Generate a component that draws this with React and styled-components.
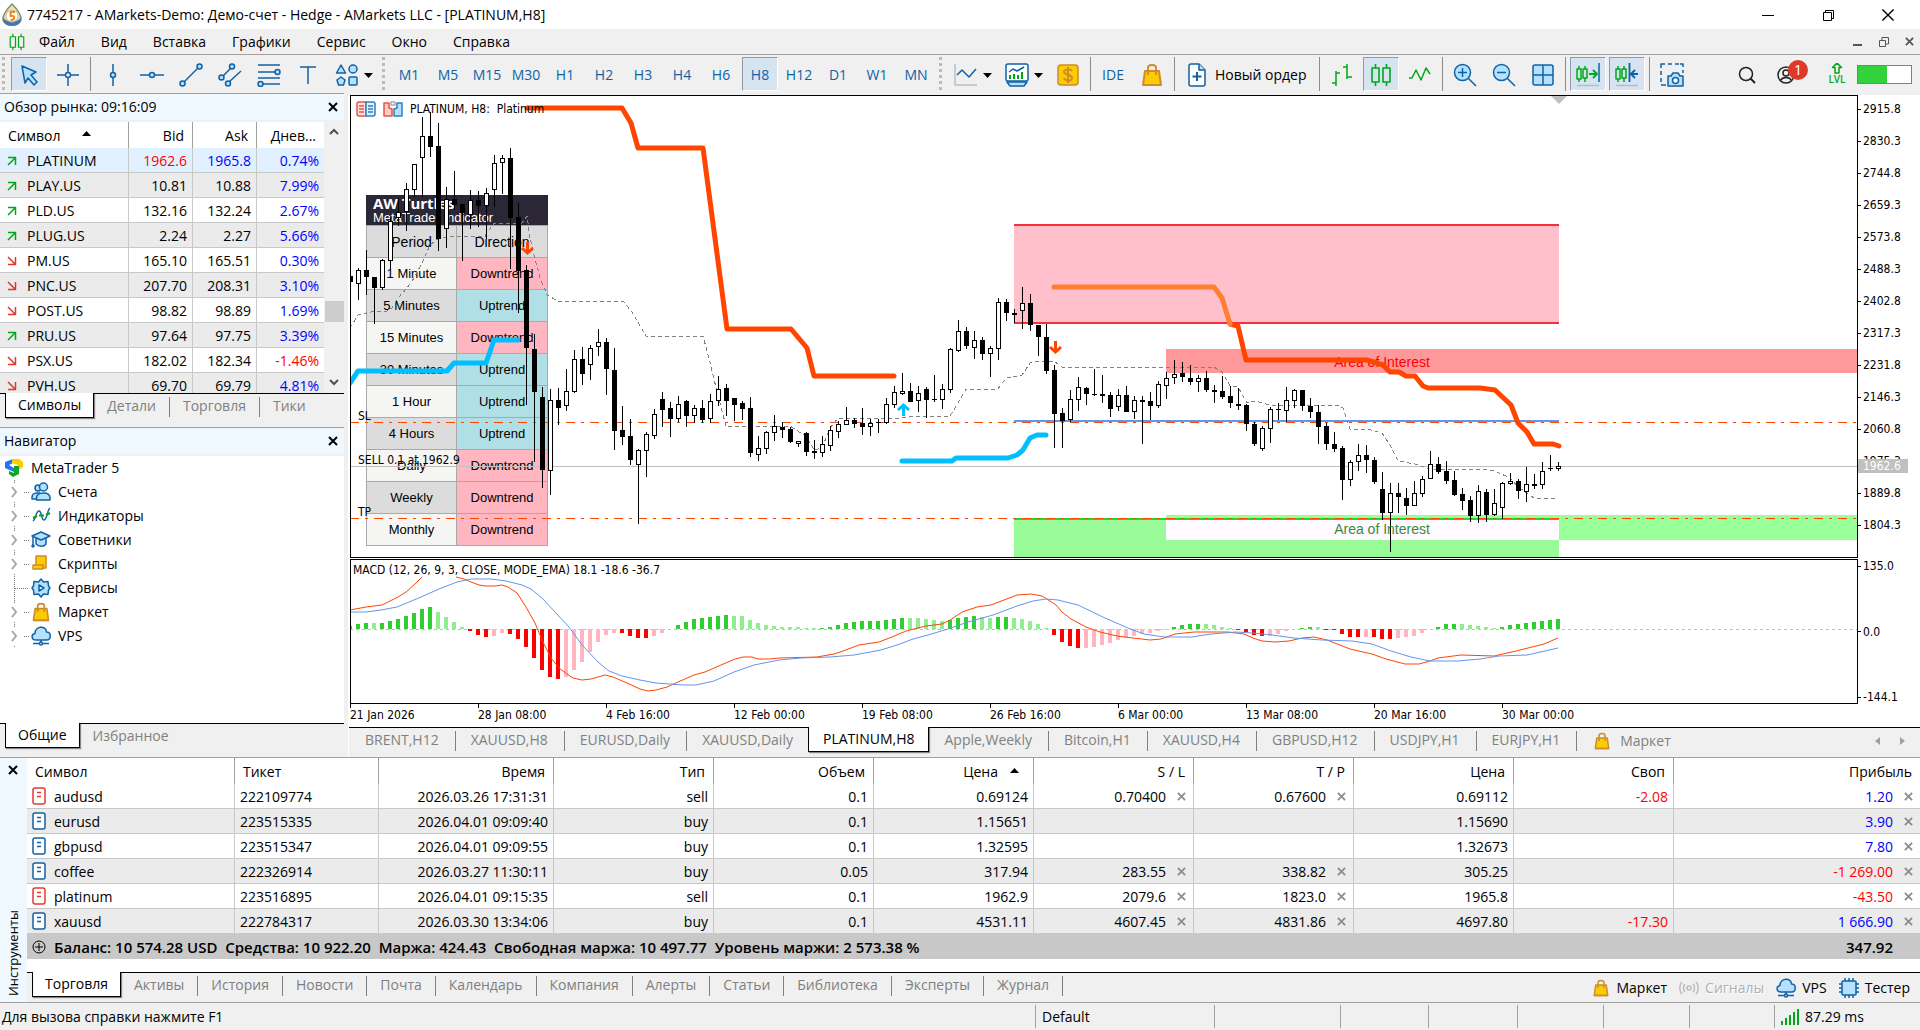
import { Fragment } from "react";
import styled, { createGlobalStyle } from "styled-components";

const blue = "#0f62a6";
const sky = "#b5e1ff";
const green = "#00a818";
const gold = "#fccb00";
const bronze = "#d08b2c";

const menu = ["Файл", "Вид", "Вставка", "Графики", "Сервис", "Окно", "Справка"];

const timeframes = ["M1", "M5", "M15", "M30", "H1", "H2", "H3", "H4", "H6", "H8", "H12", "D1", "W1", "MN"];

const quotes = [
  { symbol: "PLATINUM", up: true, bid: "1962.6", ask: "1965.8", day: "0.74%", selected: true },
  { symbol: "PLAY.US", up: true, bid: "10.81", ask: "10.88", day: "7.99%" },
  { symbol: "PLD.US", up: true, bid: "132.16", ask: "132.24", day: "2.67%" },
  { symbol: "PLUG.US", up: true, bid: "2.24", ask: "2.27", day: "5.66%" },
  { symbol: "PM.US", up: false, bid: "165.10", ask: "165.51", day: "0.30%" },
  { symbol: "PNC.US", up: false, bid: "207.70", ask: "208.31", day: "3.10%" },
  { symbol: "POST.US", up: false, bid: "98.82", ask: "98.89", day: "1.69%" },
  { symbol: "PRU.US", up: true, bid: "97.64", ask: "97.75", day: "3.39%" },
  { symbol: "PSX.US", up: false, bid: "182.02", ask: "182.34", day: "-1.46%" },
  { symbol: "PVH.US", up: false, bid: "69.70", ask: "69.79", day: "4.81%" },
];

const trades = [
  { symbol: "audusd", ticket: "222109774", time: "2026.03.26 17:31:31", type: "sell", volume: "0.1", open: "0.69124", sl: "0.70400", tp: "0.67600", price: "0.69112", swap: "-2.08", profit: "1.20" },
  { symbol: "eurusd", ticket: "223515335", time: "2026.04.01 09:09:40", type: "buy", volume: "0.1", open: "1.15651", sl: "", tp: "", price: "1.15690", swap: "", profit: "3.90" },
  { symbol: "gbpusd", ticket: "223515347", time: "2026.04.01 09:09:55", type: "buy", volume: "0.1", open: "1.32595", sl: "", tp: "", price: "1.32673", swap: "", profit: "7.80" },
  { symbol: "coffee", ticket: "222326914", time: "2026.03.27 11:30:11", type: "buy", volume: "0.05", open: "317.94", sl: "283.55", tp: "338.82", price: "305.25", swap: "", profit: "-1 269.00" },
  { symbol: "platinum", ticket: "223516895", time: "2026.04.01 09:15:35", type: "sell", volume: "0.1", open: "1962.9", sl: "2079.6", tp: "1823.0", price: "1965.8", swap: "", profit: "-43.50" },
  { symbol: "xauusd", ticket: "222784317", time: "2026.03.30 13:34:06", type: "buy", volume: "0.1", open: "4531.11", sl: "4607.45", tp: "4831.86", price: "4697.80", swap: "-17.30", profit: "1 666.90" },
];

const chartTabs = ["BRENT,H12", "XAUUSD,H8", "EURUSD,Daily", "XAUUSD,Daily", "PLATINUM,H8", "Apple,Weekly", "Bitcoin,H1", "XAUUSD,H4", "GBPUSD,H12", "USDJPY,H1", "EURJPY,H1"];

const toolTabs = ["Торговля", "Активы", "История", "Новости", "Почта", "Календарь", "Компания", "Алерты", "Статьи", "Библиотека", "Эксперты", "Журнал"];

const trends = [
  ["1 Minute", "Downtrend"],
  ["5 Minutes", "Uptrend"],
  ["15 Minutes", "Downtrend"],
  ["30 Minutes", "Uptrend"],
  ["1 Hour", "Uptrend"],
  ["4 Hours", "Uptrend"],
  ["Daily", "Downtrend"],
  ["Weekly", "Downtrend"],
  ["Monthly", "Downtrend"],
];

const prices = ["2915.8", "2830.3", "2744.8", "2659.3", "2573.8", "2488.3", "2402.8", "2317.3", "2231.8", "2146.3", "2060.8", "1975.3", "1889.8", "1804.3"];

const dates = ["21 Jan 2026", "28 Jan 08:00", "4 Feb 16:00", "12 Feb 00:00", "19 Feb 08:00", "26 Feb 16:00", "6 Mar 00:00", "13 Mar 08:00", "20 Mar 16:00", "30 Mar 00:00"];

// high, body top, body bottom, low, rising
const candles = [
  [181, 181, 187, 187, 0], [173, 175, 189, 205, 1], [155, 175, 182, 200, 0], [182, 182, 193, 229, 0], [164, 165, 193, 195, 1],
  [122, 126, 166, 174, 1], [103, 117, 123, 131, 1], [88, 94, 117, 136, 1], [69, 69, 95, 102, 1], [22, 41, 63, 102, 1],
  [17, 41, 52, 62, 0], [28, 51, 144, 156, 0], [92, 104, 134, 153, 1], [76, 104, 110, 115, 0], [109, 109, 118, 166, 0],
  [95, 105, 120, 134, 1], [96, 105, 111, 132, 0], [93, 98, 111, 144, 1], [60, 68, 95, 112, 1], [60, 63, 68, 99, 1],
  [53, 63, 123, 174, 0], [108, 122, 176, 218, 0], [170, 175, 253, 310, 0], [239, 254, 297, 367, 0], [292, 302, 375, 393, 0],
  [294, 305, 376, 400, 1], [293, 305, 313, 330, 0], [274, 296, 311, 316, 1], [255, 264, 297, 298, 1], [252, 264, 279, 290, 0],
  [250, 253, 270, 285, 1], [234, 247, 252, 261, 1], [243, 247, 274, 300, 0], [253, 275, 336, 355, 0], [311, 335, 342, 350, 0],
  [324, 341, 365, 370, 0], [354, 355, 370, 429, 1], [337, 339, 356, 382, 1], [314, 319, 341, 344, 1], [297, 304, 315, 332, 0],
  [307, 313, 324, 342, 0], [301, 309, 324, 327, 1], [305, 306, 321, 332, 0], [310, 313, 321, 328, 1], [305, 313, 325, 328, 0],
  [299, 306, 324, 328, 1], [281, 294, 306, 311, 1], [289, 293, 306, 321, 0], [303, 303, 310, 326, 0], [306, 308, 314, 325, 0],
  [302, 313, 358, 362, 0], [341, 353, 360, 366, 1], [336, 337, 354, 359, 1], [320, 331, 338, 346, 1], [327, 332, 335, 343, 0],
  [332, 334, 347, 348, 0], [346, 346, 349, 352, 1], [337, 338, 357, 361, 0], [345, 356, 358, 364, 0], [341, 349, 358, 362, 1],
  [331, 335, 351, 356, 1], [326, 329, 337, 343, 1], [312, 325, 330, 330, 1], [323, 325, 329, 333, 0], [313, 328, 332, 340, 0],
  [324, 328, 332, 341, 1], [324, 327, 328, 338, 0], [303, 309, 328, 329, 1], [291, 297, 310, 313, 1], [278, 296, 299, 300, 1],
  [288, 296, 307, 307, 0], [291, 298, 306, 317, 1], [292, 294, 305, 323, 0], [280, 304, 305, 307, 0], [289, 294, 305, 314, 1],
  [253, 254, 295, 298, 1], [225, 236, 256, 257, 1], [232, 236, 251, 254, 0], [236, 245, 253, 264, 1], [242, 245, 259, 265, 0],
  [251, 253, 259, 282, 1], [203, 207, 254, 265, 1], [204, 207, 218, 226, 0], [214, 218, 220, 228, 0], [192, 208, 216, 234, 1],
  [199, 208, 230, 236, 0], [230, 230, 242, 261, 0], [229, 242, 276, 279, 0], [270, 275, 319, 353, 0], [313, 318, 326, 353, 0],
  [295, 304, 325, 327, 1], [282, 292, 305, 316, 1], [292, 293, 299, 310, 0], [274, 299, 300, 301, 0], [280, 299, 301, 308, 0],
  [297, 300, 314, 322, 0], [294, 300, 312, 316, 1], [291, 300, 317, 317, 0], [301, 305, 317, 324, 1], [301, 305, 307, 349, 0],
  [297, 306, 311, 325, 0], [286, 289, 311, 313, 1], [277, 283, 291, 304, 1], [265, 279, 283, 289, 1], [267, 278, 282, 287, 0],
  [270, 283, 287, 290, 0], [280, 283, 287, 297, 1], [276, 283, 295, 297, 0], [290, 295, 297, 308, 0], [281, 296, 302, 304, 0],
  [291, 301, 308, 313, 0], [293, 309, 311, 315, 0], [309, 310, 329, 336, 0], [327, 329, 349, 351, 0], [331, 333, 354, 356, 1],
  [312, 314, 334, 348, 1], [308, 314, 315, 325, 0], [292, 305, 316, 327, 1], [294, 295, 306, 313, 1], [295, 295, 311, 316, 0],
  [303, 311, 317, 323, 0], [310, 317, 332, 349, 0], [328, 331, 349, 355, 0], [337, 349, 354, 357, 0], [351, 353, 385, 405, 0],
  [365, 367, 385, 391, 1], [349, 360, 367, 376, 1], [350, 360, 365, 378, 0], [362, 365, 387, 389, 0], [377, 394, 418, 425, 0],
  [388, 398, 418, 457, 1], [388, 398, 402, 418, 0], [393, 403, 411, 420, 0], [386, 398, 411, 411, 1], [381, 384, 399, 402, 1],
  [356, 369, 384, 384, 1], [362, 369, 377, 379, 0], [366, 376, 386, 389, 0], [376, 385, 400, 401, 0], [393, 399, 406, 415, 0],
  [401, 405, 421, 427, 0], [390, 396, 421, 428, 1], [394, 397, 420, 427, 0], [394, 408, 420, 421, 1], [387, 388, 413, 424, 1],
  [378, 386, 389, 390, 1], [384, 386, 396, 404, 0], [372, 389, 397, 407, 1], [379, 389, 391, 394, 0], [367, 376, 390, 394, 1],
  [360, 373, 374, 376, 0], [367, 371, 374, 376, 1],
];

// signed height; histColors holds one letter per bar
const hist = [
  3, 5, 6, 6, 6, 8, 10, 13, 16, 20, 22, 17, 12, 7, 2, -2, -6, -8, -7, -4, -5, -10, -18, -29, -41, -48, -50, -48, -41, -33,
  -23, -13, -6, -4, -4, -7, -9, -9, -7, -4, 0, 4, 7, 10, 11, 12, 13, 14, 13, 13, 9, 6, 4, 3, 2, 2, 2, 1, 1, 1,
  2, 4, 6, 7, 8, 8, 8, 9, 10, 11, 11, 11, 10, 9, 8, 9, 11, 12, 13, 12, 11, 12, 12, 11, 10, 8, 5, 1, -6, -13,
  -17, -19, -19, -18, -16, -14, -11, -9, -7, -5, -4, -2, -1, 2, 4, 5, 5, 5, 4, 2, 1, -1, -3, -6, -7, -7, -5, -2, 0, 1,
  2, 2, -1, -1, -5, -8, -8, -8, -8, -10, -10, -9, -8, -7, -4, 0, 2, 5, 5, 5, 4, 3, 2, 1, 2, 4, 5, 6, 7, 8, 9, 10,
];
const histColors =
  "GGGLGGGGGGGLLLLRRRPPRRRRRRRPPP" +
  "PPPPRRRRPPPGGGGGGGLLLLLLLLLLLG" +
  "GGGGGGGGGGLLLLLGGGGLLGGLLLLLRR" +
  "RRPPPPPPPPPPPGGGGLLLLRRRRPPPGG" +
  "GLRRRRRPRRRPPPPPGGGLLLLLGGGGGGGG";
const histFill = { G: "#32cd32", L: "#90ee90", R: "#ff0000", P: "#ffb6c1" };

const average =
  "0,233 8,220 25,216 37,216 42,213 48,203 57,193 64,183 72,168 80,150 88,144 104,141 135,141 144,128 172,128 177,121 180,143 184,160 190,183 197,200 208,206 273,206 282,217 296,241 353,241 360,267 367,297 376,331 440,331 457,342 464,355 472,353 480,333 488,323 552,323 560,321 600,321 608,308 616,294 648,294 656,283 672,280 680,268 687,266 704,266 712,272 864,272 872,277 880,291 888,292 897,308 905,306 920,310 988,310 993,313 1000,334 1017,334 1032,338 1040,350 1048,366 1065,369 1080,374 1128,374 1145,376 1160,383 1168,392 1184,403 1208,403";

const macdFast =
  "106,17 114,19 121,22 129,25 136,26 145,26 152,25 158,27 167,33 176,47 185,63 192,80 201,98 209,108 217,114 223,118 232,120 241,119 248,117 255,115 263,117 277,123 290,129 298,131 306,130 317,127 328,122 344,115 355,112 371,105 385,99 393,97 402,97 408,99 420,99 429,98 467,97 484,94 493,91 509,85 529,82 542,77 556,71 576,66 592,64 600,60 612,52 627,47 641,45 654,40 667,35 681,34 692,36 700,41 706,45 712,52 721,59 736,67 750,72 767,76 783,78 800,80 811,79 825,74 844,72 878,72 894,74 903,78 912,81 925,82 939,81 952,78 964,77 977,80 1000,89 1022,94 1036,99 1055,104 1069,104 1080,101 1088,98 1111,95 1144,96 1166,91 1194,84 1208,78";

const macdSlow =
  "0,52 16,52 31,50 47,47 71,37 89,29 107,22 121,19 141,19 156,21 172,25 181,29 192,38 205,52 219,67 232,85 248,102 259,111 272,116 290,120 306,123 333,125 346,125 364,121 384,112 404,105 429,100 451,98 480,97 504,95 531,90 547,85 563,79 578,75 598,69 618,62 643,55 667,46 683,41 696,39 708,40 728,45 755,58 778,68 794,74 814,77 842,77 861,74 886,72 903,73 922,75 944,78 972,80 1002,81 1022,84 1041,91 1061,97 1080,101 1108,101 1130,99 1149,96 1177,95 1208,88";

const Svg = ({ w = 24, h = w, box = `0 0 ${w} ${h}`, children }) => (
  <svg width={w} height={h} viewBox={box} fill="none" stroke={blue} strokeWidth="1.5" strokeLinejoin="round" aria-hidden="true">
    {children}
  </svg>
);

const CursorIcon = () => (
  <Svg>
    <path d="M5 3l14 6-5 3 6 7-3 3-6-7-3 5z" fill={sky} />
  </Svg>
);
const CrossIcon = () => (
  <Svg>
    <path d="M12 1v8M12 15v8M1 12h8M15 12h8" />
    <circle cx="12" cy="12" r="2.5" />
  </Svg>
);
const VLineIcon = () => (
  <Svg>
    <path d="M12 1v8M12 15v8" />
    <circle cx="12" cy="12" r="2.5" fill={sky} />
  </Svg>
);
const HLineIcon = () => (
  <Svg>
    <path d="M0 12h9M15 12h9" />
    <circle cx="12" cy="12" r="2.5" fill={sky} />
  </Svg>
);
const TrendIcon = () => (
  <Svg>
    <path d="M5 19L19 5" />
    <circle cx="3.5" cy="20.5" r="2.5" fill={sky} />
    <circle cx="20.5" cy="3.5" r="2.5" fill={sky} />
  </Svg>
);
const ChannelIcon = () => (
  <Svg>
    <path d="M5 13l8-8M11 19L23 8" />
    <circle cx="3.5" cy="14.5" r="2.5" fill={sky} />
    <circle cx="14" cy="3.5" r="2.5" fill={sky} />
    <circle cx="10" cy="20.5" r="2.5" fill={sky} />
  </Svg>
);
const FiboIcon = () => (
  <Svg>
    <path d="M1 2h22M1 9h17M1 15h22M6 21h17" />
    <circle cx="20.5" cy="9" r="2.5" fill={sky} />
    <circle cx="3.5" cy="21" r="2.5" fill={sky} />
  </Svg>
);
const TextIcon = () => (
  <Svg>
    <path d="M4 4h16M12 4v17" />
  </Svg>
);
const ShapesIcon = () => (
  <Svg>
    <path d="M6 2l4.5 8h-9z" fill={sky} />
    <circle cx="18" cy="6" r="4" fill={sky} />
    <path d="M6 14l4 3-1.5 5h-5L2 17z" fill={sky} />
    <rect x="14" y="14" width="8" height="8" rx="1" fill={sky} />
  </Svg>
);
const LineChartIcon = () => (
  <Svg>
    <path d="M1 1v21h22" stroke="#bdbdbd" />
    <path d="M3 12l5-5 7 7 7-8" />
  </Svg>
);
const TemplateIcon = () => (
  <Svg>
    <rect x="1" y="1" width="22" height="17" rx="2" fill="#fff" />
    <path d="M2 19l3 4h14l3-4z" fill={sky} />
    <path d="M4 9l4-3 4 2 7-4" />
    <path d="M5 12v4M9 11v5M13 12v4M17 9v7" stroke={green} strokeWidth="2" />
  </Svg>
);
const DollarIcon = () => (
  <Svg>
    <rect x="2" y="2" width="20" height="20" rx="3" fill={gold} stroke={bronze} />
    <path d="M16 8c-1-2-8-2-8 1s8 2 8 6-7 3-8 0M12 4v16" stroke={bronze} strokeWidth="2" />
  </Svg>
);
const BagIcon = ({ size = 24 }) => (
  <Svg w={size} box="0 0 24 24">
    <path d="M5 8h14l2 14H3z" fill={gold} stroke={bronze} strokeWidth="2" />
    <path d="M8 12V5c0-4 8-4 8 0v7" stroke={bronze} strokeWidth="2" />
    <path d="M3 22h18" stroke={bronze} strokeWidth="2" />
  </Svg>
);
const OrderIcon = () => (
  <Svg w={18} h={24}>
    <path d="M3 1h8l6 6v14q0 2-2 2H3q-2 0-2-2V3q0-2 2-2z" fill="#fff" />
    <path d="M11 1v6h6" fill={sky} />
    <path d="M9 9v9M4.5 13.5h9" strokeWidth="2" />
  </Svg>
);
const BarsIcon = () => (
  <Svg>
    <path d="M6 8v15M2 20h4M6 10h4M17 1v15M13 4h4M17 14h5" stroke={green} />
  </Svg>
);
const CandlesIcon = ({ size = 24 }) => (
  <Svg w={size} box="0 0 24 24">
    <path d="M6.500 1v4M6.500 19v4M17.500 1v4M17.500 19v4M3 5h7v14H3zM14 5h7v14h-7z" stroke={green} strokeWidth="1.6" />
  </Svg>
);
const ZigzagIcon = () => (
  <Svg>
    <path d="M1 15h3l4-8 5 10 5-12 4 6" stroke={green} />
  </Svg>
);
const ZoomIcon = ({ plus }) => (
  <Svg>
    <circle cx="9.5" cy="9.5" r="8" fill={sky} />
    <path d={plus ? "M5 9.5h9M9.5 5v9M15.5 15.5L23 23" : "M5 9.5h9M15.5 15.5L23 23"} />
  </Svg>
);
const TilesIcon = () => (
  <Svg>
    <rect x="2" y="2" width="20" height="20" rx="2" fill={sky} />
    <path d="M12 2v20M2 12h20" />
  </Svg>
);
const ShiftIcon = ({ back }) => (
  <Svg>
    <path d="M3 3v3M3 16v3M1 6h4v10H1zM9 3v3M9 15v4M7 6h4v9H7z" stroke={green} />
    {back ? (
      <path d="M14.500 0v19M23 11h-6M20 7l-4 4 4 4" strokeWidth="1.8" />
    ) : (
      <path d="M13 11h7M17 7l4 4-4 4" stroke={green} strokeWidth="1.8" />
    )}
    {!back && <path d="M23 0v19" />}
    <path d="M1 22.500h22" stroke="#b4bcc4" />
  </Svg>
);
const SnapshotIcon = () => (
  <Svg>
    <path d="M1 5V1h4M8 1h4M15 1h4M23 4V1h-3M1 8v4M1 15v4M1 22h5M23 7v3" />
    <path d="M8 13h3l2-3h5l2 3h3v10H8z" fill={sky} />
    <circle cx="15.5" cy="17.5" r="3" fill="#fff" />
  </Svg>
);
const SearchIcon = () => (
  <Svg w={18}>
    <circle cx="8" cy="8" r="6.5" stroke="#222" />
    <path d="M12.5 12.5L17 17" stroke="#222" strokeWidth="2" />
  </Svg>
);
const ProfileIcon = () => (
  <Svg w={18}>
    <circle cx="9" cy="9" r="8" stroke="#222" />
    <circle cx="9" cy="7" r="3" stroke="#222" />
    <path d="M3.5 14.5c2-4 9-4 11 0" stroke="#222" />
  </Svg>
);
const LevelIcon = () => (
  <Svg w={16} h={11}>
    <path d="M8 0l4.5 4.5H10V10H6V4.5H3.5z" stroke={green} />
  </Svg>
);
const Caret = () => (
  <svg width="9" height="5" aria-hidden="true">
    <path d="M0 0h9L4.5 5z" fill="#000" />
  </svg>
);
const CloseIcon = ({ size = 10, color = "#000", weight = 2 }) => (
  <svg width={size} height={size} viewBox="0 0 10 10" stroke={color} strokeWidth={weight} aria-hidden="true">
    <path d="M1 1l8 8M9 1l-8 8" />
  </svg>
);
const AppLogo = () => (
  <Svg w={20} h={24}>
    <path d="M10 1c3 3 9 9 9 15 0 8-18 8-18 0C1 10 7 4 10 1z" fill="#ece4c4" stroke="#7b8f70" />
    <path d="M1 14c0 6 3 9 9 9s9-3 9-9c-3 6-15 6-18 0z" fill="#3f78b4" stroke="none" />
    <circle cx="10" cy="13" r="6" fill="#fff" stroke="#e0b060" strokeWidth="1" />
    <path d="M13 9H8.5v4c5-1 5 4 0 4" stroke="#ee8a1d" strokeWidth="2" />
  </Svg>
);
const MetaLogo = () => (
  <Svg w={20}>
    <path d="M1 4l8-3v4l-4 2 5 3v4L1 10z" fill="#2276f5" stroke="none" />
    <path d="M8 1h7l4 3v5l-5 3V7L8 5z" fill="#fccb00" stroke="none" />
    <path d="M5 13l5 2V8h5v8l-6 3-4-3z" fill="#0aa825" stroke="none" />
  </Svg>
);
const PeopleIcon = () => (
  <Svg w={20}>
    <circle cx="7" cy="6" r="3" fill={sky} />
    <path d="M1 17v-2c0-3 3-4 5-4h3v6z" fill={sky} />
    <circle cx="12.5" cy="5" r="4" fill={sky} />
    <path d="M5.5 18v-2c0-3 3-5 7-5s6.500 2 6.500 5v2z" fill={sky} />
  </Svg>
);
const IndicatorIcon = () => (
  <Svg w={20}>
    <path d="M2 15c3-2 3-10 6-10s2 9 5 9 3-10 6-12" />
    <path d="M2 12l4-2M8 9.5h5M15 9l4-2" stroke={green} strokeWidth="2" />
  </Svg>
);
const AdvisorIcon = () => (
  <Svg w={20}>
    <path d="M5 7v7c3 3 8 3 10 0V7" fill={sky} />
    <path d="M10 2l9 4-9 4-9-4z" fill={sky} />
    <path d="M2 7v9" />
    <circle cx="2" cy="16" r="1" />
  </Svg>
);
const ScriptIcon = () => (
  <Svg w={20}>
    <path d="M5 2h10v12H5z" fill={gold} stroke={bronze} />
    <path d="M2 11h10v4H2z" fill={gold} stroke={bronze} />
  </Svg>
);
const ServiceIcon = () => (
  <Svg w={20}>
    <path d="M10 1l2.500 3 4.500-.5.5 4.500 1.500 2-1.500 2-.5 4.500-4.500-.5L10 19l-2.500-3-4.500.5-.5-4.500L1 10l1.500-2L3 3.500l4.500.5z" fill={sky} />
    <path d="M8 7l5 3-5 3z" fill="#fff" />
  </Svg>
);
const CloudIcon = () => (
  <Svg w={20}>
    <path d="M5 14c-5 0-5-6-1-6.500C4 0 15-1 15.500 6c5 0 5 8 0 8z" fill={sky} />
    <path d="M10 14v3M2 17.500h6M12 17.500h6" />
    <circle cx="10" cy="17.500" r="1.500" />
  </Svg>
);
const ChipIcon = () => (
  <Svg w={20}>
    <path d="M6 0v20M10 0v20M14 0v20M0 6h20M0 10h20M0 14h20" />
    <rect x="3" y="3" width="14" height="14" rx="1" fill={sky} />
  </Svg>
);
const SignalIcon = () => (
  <Svg w={20}>
    <path d="M6 6c-2 2-2 6 0 8M3 4c-3 3-3 9 0 12M14 6c2 2 2 6 0 8M17 4c3 3 3 9 0 12" stroke="#bbb" />
    <circle cx="10" cy="10" r="2" stroke="#bbb" />
  </Svg>
);
const DocIcon = ({ sell }) => {
  const color = sell ? "#e23b30" : blue;
  return (
    <Svg w={14} h={18}>
      <rect x="1" y="1" width="12" height="16" rx="2" fill="#fff" stroke={color} />
      <path d="M5 5.500h4M5 9.500h4" stroke={color} />
    </Svg>
  );
};
const DirectionIcon = ({ up }) => (
  <Svg w={10}>
    {up ? <path d="M1 9l7.500-7.500M1 1.500h7.500V9" stroke={green} /> : <path d="M1 1l7.500 7.500M8.500 1v7.500H1" stroke="#dd3a2a" />}
  </Svg>
);
const DepthIcon = () => (
  <Svg w={20} h={16}>
    <path d="M10 1H3Q1 1 1 3v10q0 2 2 2h7z" fill="#ffe3df" stroke="#e2554b" />
    <path d="M10 1h7q2 0 2 2v10q0 2-2 2h-7z" fill="#dff1ff" stroke="#2f7fc0" />
    <path d="M3 5h5M3 8h5M3 11h5" stroke="#e2554b" />
    <path d="M12 5h5M12 8h5M12 11h5" stroke="#2f7fc0" />
  </Svg>
);
const QuickIcon = () => (
  <Svg w={20} h={16}>
    <path d="M1 2h5v5l3 1v7H1z" fill="#ffc9c4" stroke="#e2554b" />
    <path d="M19 2h-5v5l-3 1v7h8z" fill={sky} stroke="#2f7fc0" />
    <path d="M8 1h4v3H8z" stroke="#aaa" />
  </Svg>
);

const TabStrip = ({ items, active, inset = 5, pad = 13, extra }) => (
  <Tabs $inset={inset}>
    {items.map((name, i) => (
      <Fragment key={name}>
        <Tab type="button" $active={i === active} $pad={pad}>
          {name}
        </Tab>
        {i !== active && i + 1 !== active && (i + 1 < items.length || extra) && <TabLine />}
      </Fragment>
    ))}
    {extra}
  </Tabs>
);

const navigator = [
  ["Счета", PeopleIcon],
  ["Индикаторы", IndicatorIcon],
  ["Советники", AdvisorIcon],
  ["Скрипты", ScriptIcon],
  ["Сервисы", ServiceIcon],
  ["Маркет", () => <BagIcon size={20} />],
  ["VPS", CloudIcon],
];

const drawTools = [
  [VLineIcon, "Вертикальная линия"],
  [HLineIcon, "Горизонтальная линия"],
  [TrendIcon, "Трендовая линия"],
  [ChannelIcon, "Канал"],
  [FiboIcon, "Фибоначчи"],
  [TextIcon, "Текст"],
];

const Toolbar = () => (
  <ToolRow>
    <Grip />
    <Tool type="button" $on aria-label="Курсор"><CursorIcon /></Tool>
    <Tool type="button" aria-label="Перекрестие"><CrossIcon /></Tool>
    <Divider />
    {drawTools.map(([Icon, label]) => (
      <Tool key={label} type="button" aria-label={label}><Icon /></Tool>
    ))}
    <DropTool type="button" aria-label="Фигуры"><ShapesIcon /><Caret /></DropTool>
    <Grip />
    {timeframes.map((t) => (
      <Tool key={t} type="button" $on={t === "H8"}>{t}</Tool>
    ))}
    <Grip />
    <DropTool type="button" aria-label="Тип графика"><LineChartIcon /><Caret /></DropTool>
    <DropTool type="button" aria-label="Шаблоны"><TemplateIcon /><Caret /></DropTool>
    <Tool type="button" aria-label="Символ"><DollarIcon /></Tool>
    <Divider />
    <Tool type="button">IDE</Tool>
    <Tool type="button" aria-label="Маркет"><BagIcon /></Tool>
    <Divider />
    <OrderTool type="button"><OrderIcon />Новый ордер</OrderTool>
    <Divider />
    <Tool type="button" aria-label="Бары"><BarsIcon /></Tool>
    <Tool type="button" $on aria-label="Свечи"><CandlesIcon /></Tool>
    <Tool type="button" aria-label="Линия"><ZigzagIcon /></Tool>
    <Divider />
    <Tool type="button" aria-label="Увеличить"><ZoomIcon plus /></Tool>
    <Tool type="button" aria-label="Уменьшить"><ZoomIcon /></Tool>
    <Tool type="button" aria-label="Плитка"><TilesIcon /></Tool>
    <Divider />
    <Tool type="button" $on aria-label="Автопрокрутка"><ShiftIcon /></Tool>
    <Tool type="button" $on aria-label="Сдвиг"><ShiftIcon back /></Tool>
    <Divider />
    <Tool type="button" aria-label="Снимок"><SnapshotIcon /></Tool>
    <ToolEnd>
      <Tool type="button" aria-label="Поиск"><SearchIcon /></Tool>
      <Profile type="button" aria-label="Профиль"><ProfileIcon /><Badge>1</Badge></Profile>
      <Level><LevelIcon />LVL</Level>
      <Battery />
    </ToolEnd>
  </ToolRow>
);

const MarketWatch = () => (
  <>
    <PanelHead>
      Обзор рынка: 09:16:09
      <Plain type="button" aria-label="Закрыть"><CloseIcon /></Plain>
    </PanelHead>
    <QuoteArea>
      <QuoteTable>
        <colgroup>
          <col width="129" /><col width="64" /><col width="64" /><col width="67" />
        </colgroup>
        <thead>
          <tr>
            <th>
              <span>Символ</span>
              <svg width="9" height="5" aria-hidden="true"><path d="M0 5h9L4.5 0z" /></svg>
            </th>
            <th>Bid</th><th>Ask</th><th>Днев...</th>
          </tr>
        </thead>
        <tbody>
          {quotes.map((q) => (
            <QuoteRow key={q.symbol} $selected={q.selected}>
              <td><DirectionIcon up={q.up} />{q.symbol}</td>
              <Num $tone={q.selected && "red"}>{q.bid}</Num>
              <Num $tone={q.selected && "blue"}>{q.ask}</Num>
              <Num $tone={q.day.startsWith("-") ? "red" : "blue"}>{q.day}</Num>
            </QuoteRow>
          ))}
        </tbody>
      </QuoteTable>
      <Scroll>
        <Plain type="button" aria-label="Вверх">
          <svg width="10" height="8" fill="none" stroke="#505050" strokeWidth="2"><path d="M1 6l4-4 4 4" /></svg>
        </Plain>
        <Thumb />
        <Plain type="button" aria-label="Вниз">
          <svg width="10" height="8" fill="none" stroke="#505050" strokeWidth="2"><path d="M1 1l4 4 4-4" /></svg>
        </Plain>
      </Scroll>
    </QuoteArea>
    <TabStrip items={["Символы", "Детали", "Торговля", "Тики"]} active={0} />
  </>
);

const Navigator = () => (
  <>
    <PanelHead>
      Навигатор
      <Plain type="button" aria-label="Закрыть"><CloseIcon /></Plain>
    </PanelHead>
    <Tree>
      <Root><MetaLogo />MetaTrader 5</Root>
      {navigator.map(([name, Icon]) => (
        <Node key={name}>
          <svg width="30" height="24" fill="none" aria-hidden="true">
            <path d={name === "Сервисы" ? "M14.5 0v24M15 12.5h14" : "M14.5 0v3M14.5 22v2M24 12.5h5"} stroke="#777" strokeDasharray="1 1" />
            {name !== "Сервисы" && <path d="M12 7l4 5-4 5" stroke="#a6a6a6" strokeWidth="2" />}
          </svg>
          <Icon />
          {name}
        </Node>
      ))}
    </Tree>
    <TabStrip items={["Общие", "Избранное"]} active={0} />
  </>
);

const PricePlot = () => (
  <Plot>
    <TrendTable>
      <caption>
        <b>AW Turtles</b>
        MetaTrader Indicator
      </caption>
      <colgroup>
        <col width="90" /><col />
      </colgroup>
      <thead>
        <tr><th>Period</th><th>Direction</th></tr>
      </thead>
      <tbody>
        {trends.map(([period, dir]) => (
          <tr key={period}>
            <td>{period}</td>
            <Direction $up={dir === "Uptrend"}>{dir}</Direction>
          </tr>
        ))}
      </tbody>
    </TrendTable>
    <Canvas height="461">
      <svg x="-1" y="-1" width="101%" height="462" overflow="visible">
        <path d="M1201 1h16l-8 8z" fill="#c0c0c0" />
        <g shapeRendering="crispEdges">
          <rect x="664" y="129" width="545" height="99" fill="#ffc0cb" />
          <rect x="664" y="129" width="545" height="2" fill="#f5303a" />
          <rect x="664" y="227" width="545" height="2" fill="#f5303a" />
          <rect x="816" y="254" width="100%" height="24" fill="#ff9999" />
          <rect x="816" y="420" width="100%" height="25" fill="#99ff99" />
          <rect x="664" y="423" width="545" height="39" fill="#98fb98" />
          <rect x="816" y="424" width="393" height="21" fill="#fffaff" />
          <rect x="664" y="423" width="545" height="2" fill="#32cd32" />
          <rect x="664" y="325" width="545" height="2" fill="#6495ed" />
          <rect x="0" y="371" width="100%" height="1" fill="#c0c0c0" />
          <path d="M0 327.5h1520M0 423.5h1520" stroke="#ff4500" strokeDasharray="9 6 3 6" />
        </g>
        <polyline points={average} fill="none" stroke="#808080" strokeDasharray="4 3" shapeRendering="crispEdges" />
        <g shapeRendering="crispEdges">
          {candles.map(([high, top, bottom, low, rising], i) => (
            <g key={i}>
              <rect x={i * 8} y={high} width="1" height={low - high} />
              <rect x={i * 8 - 2} y={top} width="5" height={bottom - top} />
              {rising === 1 && <rect x={i * 8 - 1} y={top + 1} width="3" height={bottom - top - 2} fill="#fff" />}
            </g>
          ))}
        </g>
        <AreaText x="1032" y="272" fill="#ff0000">Area of Interest</AreaText>
        <AreaText x="1032" y="439" fill="#3b8a3b">Area of Interest</AreaText>
        <g fill="none" strokeWidth="5" strokeLinecap="round" strokeLinejoin="round">
          <g stroke="#ff4500">
            <polyline points="177,13 272,13 281,28 288,53 353,53 377,234 441,234 457,253 464,281 544,281" />
            <polyline points="880,229 888,231 896,265 1017,265 1033,270 1040,277 1049,277 1056,281 1065,281 1073,291 1078,293 1130,293 1145,295 1161,310 1168,328 1177,337 1184,349 1203,349 1209,351" />
          </g>
          <polyline points="704,192 864,192 872,203 880,229" stroke="#ff7f32" />
          <g stroke="#00bfff">
            <polyline points="0,288 8,276 97,276 104,268 136,268 144,245 168,245" />
            <polyline points="552,366 602,366 606,363 658,363 667,360 673,355 680,343 687,340 696,340" />
          </g>
        </g>
        <g fill="none" strokeWidth="3">
          <path d="M177.5 147v10M172 153l5.500 5 5.500-5M705.500 246v10M700 252l5.500 5 5.500-5" stroke="#ff4500" />
          <path d="M553.5 321v-10M548 315l5.500-5 5.500 5" stroke="#00bfff" />
        </g>
        <g fill="#000">
          <ChartText x="8" y="325">SL</ChartText>
          <ChartText x="8" y="369">SELL 0.1 at 1962.9</ChartText>
          <ChartText x="8" y="421">TP</ChartText>
        </g>
      </svg>
    </Canvas>
    <PlotTitle>
      <DepthIcon />
      <QuickIcon />
      <span>PLATINUM, H8:&nbsp; Platinum</span>
    </PlotTitle>
  </Plot>
);

const MacdPlot = () => (
  <Plot>
    <Canvas height="143">
      <svg x="-1" width="101%" height="143" overflow="visible">
        <g shapeRendering="crispEdges">
          <path d="M0 69.5h1520" stroke="#c0c0c0" strokeDasharray="3 3" />
          {hist.map((h, i) => (
            <rect key={i} x={i * 8 - 2} y={h > 0 ? 69 - h : 69} width="4" height={Math.abs(h)} fill={histFill[histColors[i]]} />
          ))}
        </g>
        <g fill="none">
          <polyline points="0,50 16,47 32,45 48,37 56,32 65,24 72,17" stroke="#ff4500" />
          <polyline points={macdFast} stroke="#ff4500" />
          <polyline points={macdSlow} stroke="#6495ed" />
        </g>
        <ChartText x="3" y="14">MACD (12, 26, 9, 3, CLOSE, MODE_EMA) 18.1 -18.6 -36.7</ChartText>
      </svg>
    </Canvas>
  </Plot>
);

const Chart = () => (
  <ChartColumn>
    <Panes>
      <PricePlot />
      <PriceAxis>
        {prices.map((p) => <Tick key={p}>{p}</Tick>)}
        <CurrentPrice>1962.6</CurrentPrice>
      </PriceAxis>
      <MacdPlot />
      <MacdAxis>
        <Tick>135.0</Tick><Tick>0.0</Tick><Tick>-144.1</Tick>
      </MacdAxis>
    </Panes>
    <TimeAxis>
      {dates.map((d) => <span key={d}>{d}</span>)}
    </TimeAxis>
    <TabStrip
      items={chartTabs}
      active={4}
      inset={1}
      pad={15}
      extra={
        <>
          <MarketTab type="button"><BagIcon size={18} />Маркет</MarketTab>
          <Pager>
            <Plain type="button" aria-label="Назад"><svg width="5" height="8"><path d="M5 0v8L0 4z" fill="#a0a0a0" /></svg></Plain>
            <Plain type="button" aria-label="Вперед"><svg width="5" height="8"><path d="M0 0v8l5-4z" fill="#a0a0a0" /></svg></Plain>
          </Pager>
        </>
      }
    />
  </ChartColumn>
);

const tone = (v) => (v.startsWith("-") ? "red" : "blue");

const Closable = ({ value, color }) => (
  <Num $tone={color}>
    {value && (
      <>
        {value}
        <RowClose type="button" aria-label="Удалить"><CloseIcon size={9} color="#8c8c8c" /></RowClose>
      </>
    )}
  </Num>
);

const Toolbox = () => (
  <ToolboxArea>
    <Side>
      <Plain type="button" aria-label="Закрыть"><CloseIcon /></Plain>
      <span>Инструменты</span>
    </Side>
    <ToolboxBody>
      <TradeTable>
        <colgroup>
          <col width="208" /><col width="144" /><col width="175" />
          {[1, 2, 3, 4, 5, 6, 7].map((n) => <col key={n} width="160" />)}
          <col />
        </colgroup>
        <thead>
          <tr>
            <th>Символ</th><th>Тикет</th><th>Время</th><th>Тип</th><th>Объем</th>
            <th>
              Цена
              <svg width="9" height="5" aria-hidden="true"><path d="M0 5h9L4.5 0z" /></svg>
            </th>
            <th>S / L</th><th>T / P</th><th>Цена</th><th>Своп</th><th>Прибыль</th>
          </tr>
        </thead>
        <tbody>
          {trades.map((t) => (
            <TradeRow key={t.ticket}>
              <td><DocIcon sell={t.type === "sell"} />{t.symbol}</td>
              <td>{t.ticket}</td>
              <Num>{t.time}</Num>
              <Num>{t.type}</Num>
              <Num>{t.volume}</Num>
              <Num>{t.open}</Num>
              <Closable value={t.sl} />
              <Closable value={t.tp} />
              <Num>{t.price}</Num>
              <Num $tone="red">{t.swap}</Num>
              <Closable value={t.profit} color={tone(t.profit)} />
            </TradeRow>
          ))}
        </tbody>
      </TradeTable>
      <Summary>
        <svg width="14" height="14" fill="none" stroke="#000" aria-hidden="true">
          <circle cx="7" cy="7" r="6" />
          <path d="M7 3v8M3 7h8" />
        </svg>
        <span>Баланс: 10 574.28 USD&nbsp; Средства: 10 922.20&nbsp; Маржа: 424.43&nbsp; Свободная маржа: 10 497.77&nbsp; Уровень маржи: 2 573.38 %</span>
        <span>347.92</span>
      </Summary>
      <TabStrip
        items={toolTabs}
        active={0}
        extra={
          <Links>
            <LinkButton type="button"><BagIcon size={18} />Маркет</LinkButton>
            <LinkButton type="button" disabled><SignalIcon />Сигналы</LinkButton>
            <LinkButton type="button"><CloudIcon />VPS</LinkButton>
            <LinkButton type="button"><ChipIcon />Тестер</LinkButton>
          </Links>
        }
      />
    </ToolboxBody>
  </ToolboxArea>
);

const App = () => (
  <Window>
    <GlobalStyle />
    <TitleBar>
      <AppLogo />
      <span>7745217 - AMarkets-Demo: Демо-счет - Hedge - AMarkets LLC - [PLATINUM,H8]</span>
      <WindowButtons>
        <Plain type="button" aria-label="Свернуть"><svg width="12" height="12" stroke="#000"><path d="M0 6.5h12" /></svg></Plain>
        <Plain type="button" aria-label="Развернуть">
          <svg width="12" height="12" fill="none" stroke="#000"><path d="M1.5 3.5h8v8h-8zM3.5 3V1.5h8v8H10" /></svg>
        </Plain>
        <Plain type="button" aria-label="Закрыть"><CloseIcon size={14} weight={1} /></Plain>
      </WindowButtons>
    </TitleBar>
    <MenuBar>
      <CandlesIcon size={18} />
      {menu.map((m) => <button key={m} type="button">{m}</button>)}
      <MdiButtons>
        <Plain type="button" aria-label="Свернуть график"><svg width="10" height="10" stroke="#555" strokeWidth="2"><path d="M0 8h9" /></svg></Plain>
        <Plain type="button" aria-label="Восстановить график">
          <svg width="10" height="10" fill="none" stroke="#555"><path d="M.5 3.5h6v6h-6zM3 3V.5h6.500V7H7" /></svg>
        </Plain>
        <Plain type="button" aria-label="Закрыть график"><CloseIcon size={9} color="#555" /></Plain>
      </MdiButtons>
    </MenuBar>
    <Toolbar />
    <Work>
      <Left>
        <MarketWatch />
        <Navigator />
      </Left>
      <Chart />
    </Work>
    <Toolbox />
    <StatusBar>
      <span>Для вызова справки нажмите F1</span>
      <span>Default</span>
      <span /><span /><span /><span /><span /><span />
      <span>
        <svg width="18" height="16" fill={green} aria-hidden="true">
          <path d="M0 12h2v4H0zM4 9h2v7H4zM8 6h2v10H8zM12 3h2v13h-2zM16 0h2v16h-2z" />
        </svg>
        87.29 ms
      </span>
    </StatusBar>
  </Window>
);

const GlobalStyle = createGlobalStyle`
  * {
    box-sizing: border-box;
  }
  body {
    margin: 0;
    background: #f0f0f0;
    color: #000;
    font: 14px/20px "Open Sans", "Noto Sans", sans-serif;
  }
  button {
    padding: 0;
    border: 0;
    background: none;
    color: inherit;
    font: inherit;
    white-space: nowrap;
  }
  svg {
    flex: none;
  }
`;

const Window = styled.div`
  display: flex;
  flex-direction: column;
  min-height: 100vh;
  overflow: hidden;
`;

const Plain = styled.button`
  display: flex;
  align-items: center;
  justify-content: center;
`;

const TitleBar = styled.header`
  display: flex;
  align-items: center;
  gap: 5px;
  height: 29px;
  padding-left: 2px;
  background: #fff;
`;

const WindowButtons = styled.div`
  display: flex;
  margin-left: auto;
  padding-right: 2px;
  ${Plain} {
    width: 60px;
    height: 28px;
  }
`;

const MenuBar = styled.nav`
  display: flex;
  align-items: center;
  gap: 26px;
  height: 26px;
  padding: 0 6px 0 8px;
  border-bottom: 1px solid #a0a0a0;
  > svg {
    margin-right: -13px;
  }
`;

const MdiButtons = styled.div`
  display: flex;
  gap: 16px;
  margin-left: auto;
`;

const ToolRow = styled.div`
  display: flex;
  align-items: center;
  gap: 3px;
  height: 38px;
  padding-right: 8px;
  color: ${blue};
`;

const Grip = styled.i`
  width: 3px;
  height: 34px;
  margin: 0 3px 0 2px;
  background: repeating-linear-gradient(#bbb 0 3px, transparent 3px 6px);
`;

const Divider = styled.i`
  width: 1px;
  height: 34px;
  margin: 0 1px;
  background: #8c8c8c;
`;

const Tool = styled.button`
  display: flex;
  align-items: center;
  justify-content: center;
  flex: none;
  width: 36px;
  height: 34px;
  padding-top: 2px;
  border: 1px solid transparent;
  ${(p) => p.$on && "background: #d6e4f2; border-color: #8f9ba8 #fff #fff #8f9ba8;"}
`;

const DropTool = styled(Tool)`
  justify-content: flex-start;
  gap: 5px;
  width: 48px;
  padding-left: 5px;
`;

const OrderTool = styled(Tool)`
  gap: 9px;
  width: auto;
  padding: 2px 7px 0 8px;
  color: #000;
`;

const ToolEnd = styled.div`
  display: flex;
  align-items: center;
  margin-left: auto;
`;

const Profile = styled(Tool)`
  position: relative;
  justify-content: flex-start;
  width: 48px;
  padding-left: 11px;
`;

const Badge = styled.span`
  position: absolute;
  top: 2px;
  right: 4px;
  width: 20px;
  border-radius: 50%;
  background: #dd3a2a;
  color: #fff;
`;

const Level = styled.div`
  display: flex;
  flex-direction: column;
  align-items: center;
  width: 44px;
  padding-left: 4px;
  color: ${green};
  font-size: 10px;
  font-weight: 600;
  line-height: 11px;
`;

const Battery = styled.div`
  width: 55px;
  height: 19px;
  border: 1px solid #808080;
  background: linear-gradient(90deg, #33d13b 55%, #fff 55%);
`;

const Work = styled.main`
  display: flex;
  flex: 1;
  min-height: 664px;
`;

const Left = styled.aside`
  display: flex;
  flex-direction: column;
  width: 344px;
  margin-right: 4px;
`;

const PanelHead = styled.div`
  display: flex;
  align-items: center;
  justify-content: space-between;
  height: 27px;
  margin-bottom: 2px;
  padding: 0 6px 0 4px;
  border-top: 1px solid #a0a0a0;
  background: #f0f8ff;
`;

const QuoteArea = styled.div`
  display: flex;
  height: 271px;
  overflow: hidden;
`;

const Num = styled.td`
  color: ${(p) => (p.$tone === "red" ? "#ff0000" : p.$tone === "blue" ? "#0000ff" : "#000")};
  text-align: right;
`;

const QuoteTable = styled.table`
  width: 324px;
  table-layout: fixed;
  border-spacing: 0;
  background: #fff;
  th {
    height: 26px;
    padding: 2px 8px 0;
    border-right: 1px solid #a0a0a0;
    font-weight: 400;
    text-align: right;
  }
  th:first-child {
    text-align: left;
  }
  th svg {
    margin: 0 0 5px 22px;
  }
  td {
    height: 25px;
    padding: 2px 5px 0;
    border-right: 1px solid #c8c8c8;
    border-bottom: 1px solid #c8c8c8;
  }
  td:first-child {
    padding-left: 7px;
  }
  td svg {
    margin-right: 10px;
  }
  th:last-child,
  td:last-child {
    border-right: 0;
  }
`;

const QuoteRow = styled.tr`
  background: ${(p) => (p.$selected ? "#e0f0ff" : "#fff")};
  &:nth-child(even) {
    background: #ebebeb;
  }
`;

const Scroll = styled.div`
  display: flex;
  flex-direction: column;
  align-items: center;
  width: 20px;
  ${Plain} {
    height: 20px;
  }
`;

const Thumb = styled.i`
  width: 19px;
  height: 21px;
  margin: 159px 0 auto;
  background: #cdcdcd;
`;

const Tabs = styled.div`
  display: flex;
  height: 34px;
  padding-left: ${(p) => p.$inset}px;
  border-top: 1px solid #000;
`;

const Tab = styled.button`
  height: 25px;
  margin-top: -1px;
  padding: 0 ${(p) => p.$pad}px;
  color: #808080;
  ${(p) =>
    p.$active &&
    `padding: 0 ${p.$pad - 1}px;
    border: 1px solid #000;
    border-top: 0;
    background: #fff;
    box-shadow: 1px 1px 1px #888;
    color: #000;`}
`;

const TabLine = styled.i`
  width: 1px;
  height: 20px;
  margin-top: 3px;
  background: #808080;
`;

const Tree = styled.ul`
  flex: 1;
  margin: 0;
  padding: 0;
  background: #fff;
  list-style: none;
`;

const Node = styled.li`
  display: flex;
  align-items: center;
  gap: 7px;
  height: 24px;
  > svg:first-child {
    margin-right: -6px;
  }
`;

const Root = styled(Node)`
  padding-left: 4px;
  > svg:first-child {
    margin-right: 0;
  }
`;

const ChartColumn = styled.section`
  display: flex;
  flex-direction: column;
  flex: 1;
  min-width: 0;
  margin-top: 2px;
  background: #fff;
  ${Tabs} {
    height: 30px;
    margin-left: 1px;
    background: #f0f0f0;
  }
  ${TabLine} {
    margin-left: 1px;
  }
`;

const Panes = styled.div`
  display: grid;
  grid-template-columns: 1fr 62px;
  grid-template-rows: 1fr 145px;
  row-gap: 1px;
  flex: 1;
  padding-left: 2px;
  font: 12px/14px "DejaVu Sans Condensed", "DejaVu Sans", sans-serif;
`;

const Plot = styled.div`
  position: relative;
  min-width: 0;
  border: 1px solid #000;
  overflow: hidden;
`;

const Canvas = styled.svg`
  position: relative;
  display: block;
  width: 100%;
`;

const ChartText = styled.text`
  font: 12px "DejaVu Sans Condensed", "DejaVu Sans", sans-serif;
`;

const AreaText = styled.text`
  font: 14px "Liberation Sans", sans-serif;
  text-anchor: middle;
`;

const PlotTitle = styled.div`
  position: absolute;
  top: 5px;
  left: 5px;
  display: flex;
  align-items: center;
  gap: 7px;
`;

const TrendTable = styled.table`
  position: absolute;
  top: 99px;
  left: 15px;
  width: 182px;
  table-layout: fixed;
  border-collapse: collapse;
  font: 13px/16px "Liberation Sans", sans-serif;
  text-align: center;
  caption {
    height: 30px;
    padding: 1px 7px 0;
    background: #2b2737;
    color: #fff;
    line-height: 14px;
    text-align: left;
  }
  b {
    display: block;
    font: 700 15px/15px "Open Sans", sans-serif;
  }
  th,
  td {
    height: 32px;
    padding: 0;
    border: 1px solid #a9a9a9;
    background: #f5f5f3;
  }
  th {
    background: #dcdcdc;
    font-size: 14px;
    font-weight: 400;
  }
  tbody tr:nth-child(even) td:first-child {
    background: #dcdcdc;
  }
`;

const Direction = styled.td`
  && {
    background: ${(p) => (p.$up ? "#b0e0e6" : "#ffb6c1")};
  }
`;

const Tick = styled.span`
  display: flex;
  align-items: center;
  gap: 2px;
  &::before {
    content: "";
    width: 3px;
    height: 1px;
    background: #000;
  }
`;

const PriceAxis = styled.div`
  position: relative;
  padding-top: 7px;
  ${Tick} {
    height: 14px;
    margin-bottom: 18px;
  }
`;

const CurrentPrice = styled.span`
  position: absolute;
  top: 364px;
  left: 0;
  width: 50px;
  padding-left: 5px;
  background: #c0c0c0;
  color: #fff;
`;

const MacdAxis = styled.div`
  display: flex;
  flex-direction: column;
  justify-content: space-between;
`;

const TimeAxis = styled.div`
  display: flex;
  height: 23px;
  padding-left: 2px;
  font: 12px/14px "DejaVu Sans Condensed", "DejaVu Sans", sans-serif;
  span {
    flex: 0 0 128px;
    white-space: nowrap;
  }
  span::before {
    content: "";
    display: block;
    width: 1px;
    height: 4px;
    background: #000;
  }
`;

const MarketTab = styled.button`
  display: flex;
  align-items: center;
  gap: 9px;
  height: 25px;
  padding-left: 16px;
  color: #808080;
`;

const Pager = styled.div`
  display: flex;
  gap: 20px;
  height: 25px;
  margin-left: auto;
  padding-right: 15px;
`;

const ToolboxArea = styled.section`
  display: flex;
  border-top: 1px solid #a0a0a0;
`;

const Side = styled.div`
  display: flex;
  flex-direction: column;
  align-items: center;
  justify-content: space-between;
  width: 27px;
  padding: 7px 2px 6px 0;
  background: #f0f8ff;
  font-size: 13px;
  span {
    writing-mode: vertical-rl;
    transform: rotate(180deg);
  }
`;

const ToolboxBody = styled.div`
  flex: 1;
  min-width: 0;
  background: #fff;
  ${Tabs} {
    height: 30px;
    margin-top: 13px;
    background: #f0f0f0;
  }
`;

const TradeTable = styled.table`
  width: 100%;
  table-layout: fixed;
  border-spacing: 0;
  th {
    height: 26px;
    padding: 2px 8px 0;
    border-right: 1px solid #a0a0a0;
    font-weight: 400;
    text-align: right;
  }
  th:nth-child(-n + 2) {
    text-align: left;
  }
  th svg {
    margin: 0 6px 4px 12px;
  }
  td {
    height: 25px;
    padding: 2px 5px 0;
    border-right: 1px solid #c8c8c8;
    border-bottom: 1px solid #c8c8c8;
    white-space: nowrap;
  }
  td svg {
    vertical-align: middle;
  }
  td:first-child svg {
    margin: -4px 8px 0 0;
  }
  th:last-child,
  td:last-child {
    border-right: 0;
  }
`;

const TradeRow = styled.tr`
  &:nth-child(even) {
    background: #ebebeb;
  }
`;

const RowClose = styled.button`
  margin: 0 2px 4px 11px;
  vertical-align: middle;
  line-height: 0;
`;

const Summary = styled.div`
  display: flex;
  align-items: center;
  gap: 8px;
  height: 25px;
  padding: 0 27px 0 5px;
  background: #c8c8c8;
  font-size: 15px;
  font-weight: 600;
  span:last-child {
    margin-left: auto;
  }
`;

const Links = styled.div`
  display: flex;
  gap: 12px;
  margin-left: auto;
  padding-right: 10px;
`;

const LinkButton = styled.button`
  display: flex;
  align-items: center;
  gap: 6px;
  &:disabled {
    color: #b0b0b0;
    text-shadow: 1px 1px #fff;
  }
`;

const StatusBar = styled.footer`
  display: grid;
  grid-template-columns: 1fr 179px 126px 88px 89px 86px 86px 85px 146px;
  height: 28px;
  padding: 2px 0;
  border-top: 1px solid #a0a0a0;
  span {
    display: flex;
    align-items: center;
    gap: 6px;
    padding-left: 6px;
    border-left: 1px solid #a0a0a0;
  }
  span:first-child {
    padding-left: 2px;
    border-left: 0;
  }
`;

export default App;
